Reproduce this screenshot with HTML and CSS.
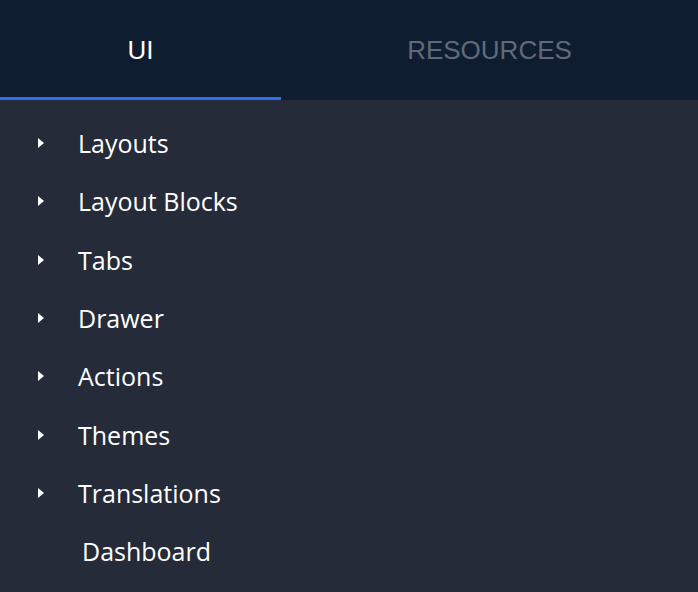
FILE: index.html
```html
<!DOCTYPE html>
<html>
<head>
<meta charset="utf-8">
<link rel="stylesheet" href="styles.css">
</head>
<body>
<div class="panel">
  <div class="tabs">
    <div class="tab active">UI</div>
    <div class="tab">RESOURCES</div>
  </div>
  <ul class="menu">
    <li class="item"><span class="caret"></span><span class="label">Layouts</span></li>
    <li class="item"><span class="caret"></span><span class="label">Layout Blocks</span></li>
    <li class="item"><span class="caret"></span><span class="label">Tabs</span></li>
    <li class="item"><span class="caret"></span><span class="label">Drawer</span></li>
    <li class="item"><span class="caret"></span><span class="label">Actions</span></li>
    <li class="item"><span class="caret"></span><span class="label">Themes</span></li>
    <li class="item"><span class="caret"></span><span class="label">Translations</span></li>
    <li class="item leaf"><span class="label">Dashboard</span></li>
  </ul>
</div>
</body>
</html>
```
FILE: styles.css
```css
html, body {
  margin: 0;
  padding: 0;
  background: #252b38;
}
.panel {
  width: 698px;
  height: 592px;
  background: #252b38;
  overflow: hidden;
}
.tabs {
  display: flex;
  height: 100px;
  background: #0f1d30;
}
.tab {
  flex: 1;
  display: flex;
  align-items: center;
  justify-content: center;
  font-family: "Liberation Sans", Arial, sans-serif;
  font-size: 26px;
  color: #5f6b7a;
  box-sizing: border-box;
}
.tab.active {
  flex: 0 0 281px;
  color: #ffffff;
  border-bottom: 3px solid #2d6ff0;
  padding-top: 3px;
}
.menu {
  list-style: none;
  margin: 0;
  padding: 14px 0 0 0;
}
.item {
  display: flex;
  align-items: center;
  height: 58.3px;
  font-family: "Open Sans", sans-serif;
  font-size: 25px;
  color: #ffffff;
}
.caret {
  width: 0;
  height: 0;
  margin-left: 38px;
  margin-right: 34px;
  border-top: 5px solid transparent;
  border-bottom: 5px solid transparent;
  border-left: 6px solid #ffffff;
}
.leaf .label {
  margin-left: 82px;
}
```
